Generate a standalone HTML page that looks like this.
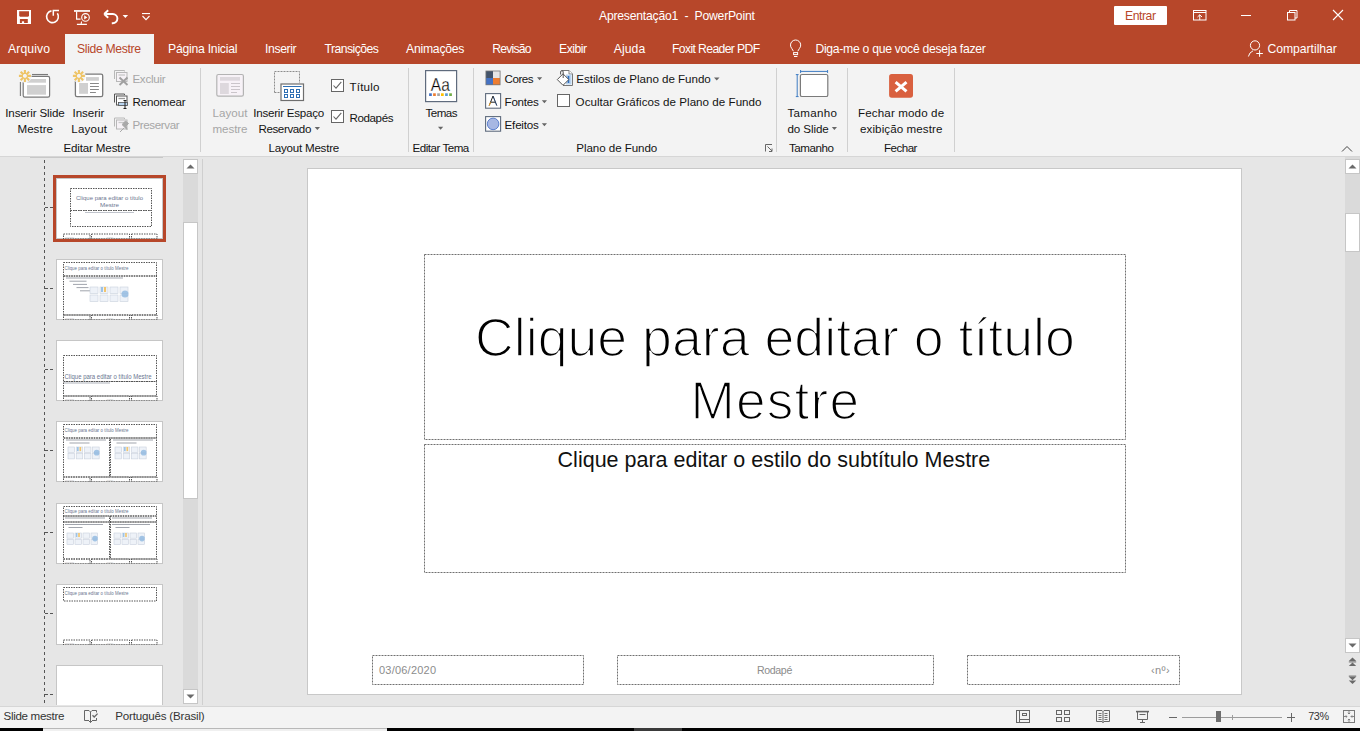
<!DOCTYPE html>
<html><head><meta charset="utf-8"><style>
html,body{margin:0;padding:0;}
body{width:1360px;height:731px;overflow:hidden;position:relative;background:#e6e6e6;font-family:'Liberation Sans', sans-serif;}
svg{overflow:visible}
</style></head><body>
<div style="position:absolute;left:0px;top:0px;width:1360px;height:64px;background:#b7472a;"></div>
<div style="position:absolute;left:65px;top:34px;width:89px;height:30px;background:#f3f3f3;"></div>
<div style="position:absolute;left:0px;top:64px;width:1360px;height:92px;background:#f3f3f3;"></div>
<div style="position:absolute;left:0px;top:156px;width:1360px;height:1px;background:#d6d6d6;"></div>
<div style="position:absolute;left:0px;top:706px;width:1360px;height:22px;background:#f3f3f3;border-top:1px solid #d6d6d6;box-sizing:border-box"></div>
<div style="position:absolute;left:0px;top:728px;width:1360px;height:3px;background:#000;"></div>
<div style="position:absolute;left:43px;top:728px;width:344px;height:3px;background:#f0f0f0;border-top:1px solid #b8b8b8;box-sizing:border-box"></div>
<div style="position:absolute;left:634px;top:728px;width:48px;height:3px;background:#3a3a3a;"></div>
<div style="position:absolute;left:1114px;top:6px;width:53px;height:19px;background:#fff;border-radius:1px"></div>
<div style="position:absolute;left:200px;top:68px;width:1px;height:84px;background:#d0d0d0;"></div>
<div style="position:absolute;left:408px;top:68px;width:1px;height:84px;background:#d0d0d0;"></div>
<div style="position:absolute;left:473px;top:68px;width:1px;height:84px;background:#d0d0d0;"></div>
<div style="position:absolute;left:776px;top:68px;width:1px;height:84px;background:#d0d0d0;"></div>
<div style="position:absolute;left:847px;top:68px;width:1px;height:84px;background:#d0d0d0;"></div>
<div style="position:absolute;left:954px;top:68px;width:1px;height:84px;background:#d0d0d0;"></div>
<div style="position:absolute;left:202px;top:159px;width:1px;height:546px;background:#cfcfcf;"></div>
<div style="position:absolute;left:183px;top:159px;width:15px;height:545px;background:#dadada;"></div>
<div style="position:absolute;left:183px;top:159px;width:15px;height:15px;background:#fff;border:1px solid #c6c6c6;box-sizing:border-box"></div>
<div style="position:absolute;left:183px;top:222px;width:15px;height:277px;background:#fff;border:1px solid #c6c6c6;box-sizing:border-box"></div>
<div style="position:absolute;left:183px;top:689px;width:15px;height:15px;background:#fff;border:1px solid #c6c6c6;box-sizing:border-box"></div>
<div style="position:absolute;left:1345px;top:157px;width:15px;height:549px;background:#dadada;"></div>
<div style="position:absolute;left:1345px;top:159px;width:15px;height:15px;background:#fff;border:1px solid #c6c6c6;box-sizing:border-box"></div>
<div style="position:absolute;left:1345px;top:213px;width:15px;height:39px;background:#fff;border:1px solid #c6c6c6;box-sizing:border-box"></div>
<div style="position:absolute;left:1345px;top:638px;width:15px;height:15px;background:#fff;border:1px solid #c6c6c6;box-sizing:border-box"></div>
<div style="position:absolute;left:1345px;top:653px;width:15px;height:53px;background:#e6e6e6;"></div>
<div style="position:absolute;left:307px;top:168px;width:935px;height:527px;background:#fff;border:1px solid #c8c8c8;box-sizing:border-box"></div>
<svg style="position:absolute;left:424px;top:254px;" width="702" height="186" viewBox="0 0 702 186"><rect x="0.5" y="0.5" width="701" height="185" fill="none" stroke="#707070" stroke-width="1" stroke-dasharray="2 1"/></svg>
<svg style="position:absolute;left:424px;top:444px;" width="702" height="129" viewBox="0 0 702 129"><rect x="0.5" y="0.5" width="701" height="128" fill="none" stroke="#707070" stroke-width="1" stroke-dasharray="2 1"/></svg>
<svg style="position:absolute;left:372px;top:655px;" width="212" height="30" viewBox="0 0 212 30"><rect x="0.5" y="0.5" width="211" height="29" fill="none" stroke="#707070" stroke-width="1" stroke-dasharray="2 1"/></svg>
<svg style="position:absolute;left:617px;top:655px;" width="317" height="30" viewBox="0 0 317 30"><rect x="0.5" y="0.5" width="316" height="29" fill="none" stroke="#707070" stroke-width="1" stroke-dasharray="2 1"/></svg>
<svg style="position:absolute;left:967px;top:655px;" width="213" height="30" viewBox="0 0 213 30"><rect x="0.5" y="0.5" width="212" height="29" fill="none" stroke="#707070" stroke-width="1" stroke-dasharray="2 1"/></svg>
<svg style="position:absolute;left:17px;top:10px;" width="14" height="14" viewBox="0 0 14 14"><rect x="0" y="0" width="14" height="14" fill="#fff"/><path d="M2.2 1.3 H12 V5.8 L11.2 6.8 H3 L2.2 5.8Z" fill="#b7472a"/><rect x="2.9" y="9" width="7.9" height="4" fill="#b7472a"/><rect x="4.9" y="11.3" width="2.2" height="1.7" fill="#fff"/></svg>
<svg style="position:absolute;left:44px;top:8px;" width="18" height="18" viewBox="0 0 18 18"><path d="M7.48 2.89 A5.9 5.9 0 1 0 13.33 5.32" fill="none" stroke="#fff" stroke-width="1.6"/><path d="M8.6 2.4 H15 M9.3 1.8 V7.8" stroke="#fff" stroke-width="1.5" fill="none"/></svg>
<svg style="position:absolute;left:73px;top:9px;" width="18" height="17" viewBox="0 0 18 17"><rect x="1" y="1.1" width="16" height="1.7" fill="#fff"/><path d="M3.6 2.5 V10.2 H7.5" fill="none" stroke="#fff" stroke-width="1.2"/><circle cx="12.5" cy="8.4" r="3.8" fill="none" stroke="#fff" stroke-width="1.1"/><path d="M11.2 6.3 L14.3 8.4 L11.2 10.5Z" fill="#fff"/><path d="M3.9 15.4 H13.9 M8.6 12.5 L8 15.4" stroke="#fff" stroke-width="1.1" fill="none"/></svg>
<svg style="position:absolute;left:102px;top:8px;" width="22" height="18" viewBox="0 0 22 18"><path d="M3.5 6 H10.8 A4.6 4.6 0 0 1 10.8 15.2 H9.8" fill="none" stroke="#fff" stroke-width="1.9"/><path d="M2.2 6 L6.2 2.2 M2.2 6 L6.2 9.8" stroke="#fff" stroke-width="1.9" fill="none"/></svg>
<svg style="position:absolute;left:122px;top:14px;" width="7" height="5" viewBox="0 0 7 5"><path d="M0.6 0.9 H6.1 L3.35 4Z" fill="#fff"/></svg>
<svg style="position:absolute;left:141px;top:12px;" width="10" height="9" viewBox="0 0 10 9"><rect x="1" y="1" width="8" height="1.1" fill="#fff"/><path d="M1.5 4 L5 7.6 L8.5 4" fill="none" stroke="#fff" stroke-width="1.1"/></svg>
<svg style="position:absolute;left:1192px;top:9px;" width="16" height="13" viewBox="0 0 16 13"><rect x="1.5" y="1.5" width="12.5" height="9.5" fill="none" stroke="#fff" stroke-width="1"/><path d="M1.5 3.5 H14" stroke="#fff" stroke-width="1"/><path d="M7.75 11 V5.8 M5.5 8 L7.75 5.8 L10 8" fill="none" stroke="#fff" stroke-width="1"/></svg>
<div style="position:absolute;left:1241px;top:15px;width:10px;height:1px;background:#fff;"></div>
<svg style="position:absolute;left:1285px;top:8px;" width="14" height="14" viewBox="0 0 14 14"><rect x="2.5" y="4.5" width="7.5" height="7.5" fill="none" stroke="#fff" stroke-width="1"/><path d="M4.5 4.5 V2.5 H12 V10 H10" fill="none" stroke="#fff" stroke-width="1"/></svg>
<svg style="position:absolute;left:1332px;top:9px;" width="12" height="12" viewBox="0 0 12 12"><path d="M1 1 L11 11 M11 1 L1 11" stroke="#fff" stroke-width="1.1"/></svg>
<svg style="position:absolute;left:788px;top:38px;" width="16" height="20" viewBox="0 0 16 20"><path d="M5.4 13.2 L3.8 10.5 A5.1 5.1 0 1 1 11.4 10.5 L9.8 13.2" fill="none" stroke="#fff" stroke-width="1"/><rect x="5.6" y="14.6" width="4" height="2" fill="none" stroke="#fff" stroke-width="1"/><path d="M6 18.5 H9.4" stroke="#fff" stroke-width="1"/></svg>
<svg style="position:absolute;left:1246px;top:38px;" width="18" height="20" viewBox="0 0 18 20"><circle cx="9" cy="7.4" r="4.6" fill="none" stroke="#fff" stroke-width="1"/><path d="M2.4 18.5 A8 8 0 0 1 7 12.8" fill="none" stroke="#fff" stroke-width="1"/><path d="M10.3 15.5 H16.9 M13.6 12.2 V18.8" stroke="#fff" stroke-width="1"/></svg>
<svg style="position:absolute;left:0px;top:0px;" width="60" height="100" viewBox="0 0 60 100"><path d="M32 74.5 H48" stroke="#7a7a7a" stroke-width="1.1"/><path d="M20.4 82 V96" stroke="#7a7a7a" stroke-width="1.1"/><rect x="23.2" y="76.4" width="26.4" height="20.8" rx="1.6" fill="#fff" stroke="#7a7a7a" stroke-width="1.2"/><rect x="27" y="79" width="19" height="3.7" fill="#d0d0d0"/><rect x="27" y="85.1" width="19" height="9.6" fill="#d0d0d0"/><circle cx="24.9" cy="75.9" r="6.8" fill="#f3f3f3"/><path d="M26.80 75.90 L30.90 75.90 M26.24 77.24 L29.14 80.14 M24.90 77.80 L24.90 81.90 M23.56 77.24 L20.66 80.14 M23.00 75.90 L18.90 75.90 M23.56 74.56 L20.66 71.66 M24.90 74.00 L24.90 69.90 M26.24 74.56 L29.14 71.66 " stroke="#eec466" stroke-width="2.1"/></svg>
<svg style="position:absolute;left:0px;top:0px;" width="110" height="100" viewBox="0 0 110 100"><rect x="75.4" y="74.2" width="27.3" height="22.5" rx="1.6" fill="#fff" stroke="#7a7a7a" stroke-width="1.3"/><rect x="86" y="77.1" width="12.9" height="3.7" fill="#d0d0d0"/><rect x="79.1" y="83" width="8.9" height="10.8" fill="#d0d0d0"/><path d="M90 83.5 H98.9 M90 86.5 H98.9 M90 89.5 H98.9 M90 92.5 H95.9" stroke="#7a7a7a" stroke-width="0.9"/><circle cx="78.9" cy="75.9" r="6.8" fill="#f3f3f3"/><path d="M80.80 75.90 L84.90 75.90 M80.24 77.24 L83.14 80.14 M78.90 77.80 L78.90 81.90 M77.56 77.24 L74.66 80.14 M77.00 75.90 L72.90 75.90 M77.56 74.56 L74.66 71.66 M78.90 74.00 L78.90 69.90 M80.24 74.56 L83.14 71.66 " stroke="#eec466" stroke-width="2.1"/></svg>
<svg style="position:absolute;left:0px;top:0px;" width="140" height="140" viewBox="0 0 140 140"><path d="M114.5 79 V70.5 H124.5 V71.5" fill="none" stroke="#b8b8b8" stroke-width="1"/><rect x="116.5" y="72.5" width="10.5" height="9" fill="#f6f2f6" stroke="#b8b8b8" stroke-width="1"/><path d="M118.5 75 H125" stroke="#c8c8c8" stroke-width="1.3"/><path d="M119.5 77.5 L127.5 85 M127.5 77.5 L119.5 85" stroke="#a0a0a0" stroke-width="1.9"/><path d="M114.5 102.5 V94.0 H124.5 V95.0" fill="none" stroke="#555" stroke-width="1"/><rect x="116.5" y="96.0" width="10.5" height="9" fill="#fff" stroke="#555" stroke-width="1"/><path d="M118.5 98.5 H125" stroke="#999" stroke-width="1.3"/><rect x="118.5" y="102.5" width="9" height="3" fill="#b8d4f0" stroke="#555" stroke-width="0.8"/><path d="M123.5 100.5 H126.5 M125 100.5 V108.5 M123.5 108.5 H126.5" stroke="#222" stroke-width="1"/><path d="M114.5 126.5 V118.0 H124.5 V119.0" fill="none" stroke="#b8b8b8" stroke-width="1"/><rect x="116.5" y="120.0" width="10.5" height="9" fill="#f6f2f6" stroke="#b8b8b8" stroke-width="1"/><path d="M118.5 122.5 H125" stroke="#c8c8c8" stroke-width="1.3"/><path d="M120 132 L124 128 M122.5 125 L127 129.5 L126 126 L128.5 123.5 L125.5 121 L123 123.5 Z" fill="#a9a9a9" stroke="#a9a9a9" stroke-width="1"/></svg>
<svg style="position:absolute;left:0px;top:0px;" width="250" height="100" viewBox="0 0 250 100"><rect x="216.8" y="74.5" width="26.6" height="21.6" rx="1.6" fill="#f7f2f7" stroke="#b3b3b3" stroke-width="1.2"/><rect x="220" y="77" width="20" height="3.7" fill="#ddd8dd"/><rect x="220" y="83" width="8.8" height="11" fill="#ddd8dd"/><path d="M231 83.5 H240 M231 86.5 H240 M231 89.5 H240 M231 92.5 H237" stroke="#c4c0c4" stroke-width="0.9"/></svg>
<svg style="position:absolute;left:0px;top:0px;" width="310" height="105" viewBox="0 0 310 105"><path d="M274.5 92.5 V71.5 H299.5 V83" fill="none" stroke="#8c8c8c" stroke-width="1" stroke-dasharray="2 1"/><path d="M274.5 92.5 H280" stroke="#8c8c8c" stroke-width="1" stroke-dasharray="2 1"/><rect x="281" y="84" width="22.5" height="16.5" fill="#fff" stroke="#6e6e6e" stroke-width="1.2"/><path d="M283 86.5 H301.5" stroke="#2e6fb4" stroke-width="1"/><rect x="284.5" y="89.5" width="3" height="3" fill="#fff" stroke="#2e6fb4" stroke-width="1"/><rect x="284.5" y="94.5" width="3" height="3" fill="#fff" stroke="#2e6fb4" stroke-width="1"/><rect x="290.5" y="89.5" width="3" height="3" fill="#fff" stroke="#2e6fb4" stroke-width="1"/><rect x="290.5" y="94.5" width="3" height="3" fill="#fff" stroke="#2e6fb4" stroke-width="1"/><rect x="296.5" y="89.5" width="3" height="3" fill="#fff" stroke="#2e6fb4" stroke-width="1"/><rect x="296.5" y="94.5" width="3" height="3" fill="#fff" stroke="#2e6fb4" stroke-width="1"/><path d="M314.7 127 H320 L317.35 130Z" fill="#666"/></svg>
<svg style="position:absolute;left:0px;top:0px;" width="600" height="130" viewBox="0 0 600 130"><rect x="331.5" y="79.5" width="12" height="12" fill="#fff" stroke="#666" stroke-width="1"/><path d="M333.5 85.5 L336 88.2 L341.3 81.8" fill="none" stroke="#666" stroke-width="1.1"/><rect x="331.5" y="110.5" width="12" height="12" fill="#fff" stroke="#666" stroke-width="1"/><path d="M333.5 116.5 L336 119.2 L341.3 112.8" fill="none" stroke="#666" stroke-width="1.1"/><rect x="557.5" y="94.5" width="12" height="12" fill="#fff" stroke="#666" stroke-width="1"/></svg>
<svg style="position:absolute;left:0px;top:0px;" width="460" height="135" viewBox="0 0 460 135"><rect x="425.6" y="70.6" width="31" height="31" fill="#fff" stroke="#5f6b7d" stroke-width="1.2"/><text x="430.8" y="90.8" font-family="Liberation Sans" font-size="17.5" fill="#000" stroke="#fff" stroke-width="0.3" textLength="19" lengthAdjust="spacingAndGlyphs">Aa</text><rect x="429.1" y="93.3" width="2.7" height="2.7" fill="#4472c4"/><rect x="433.1" y="93.3" width="2.7" height="2.7" fill="#ed7d31"/><rect x="437.2" y="93.3" width="2.7" height="2.7" fill="#a5a5a5"/><rect x="441" y="93.3" width="2.7" height="2.7" fill="#ffc000"/><rect x="445.1" y="93.3" width="2.7" height="2.7" fill="#5b9bd5"/><rect x="449.2" y="93.3" width="2.7" height="2.7" fill="#70ad47"/><path d="M438 126.8 H443.2 L440.6 129.8Z" fill="#666"/></svg>
<svg style="position:absolute;left:0px;top:0px;" width="550" height="135" viewBox="0 0 550 135"><rect x="485.5" y="70.6" width="15" height="14.6" fill="#777"/><rect x="486.3" y="71.4" width="6.7" height="6.6" fill="#44546a"/><rect x="493" y="71.4" width="6.7" height="6.6" fill="#e7e6e6"/><rect x="486.3" y="78" width="6.7" height="6.4" fill="#4472c4"/><rect x="493" y="78" width="6.7" height="6.4" fill="#ed7d31"/><rect x="485.6" y="93.6" width="15" height="14.6" fill="#fff" stroke="#5f6b7d" stroke-width="1.1"/><path d="M489.2 105.6 L493 96 L496.8 105.6 M490.6 102.2 H495.4" fill="none" stroke="#222" stroke-width="1"/><path d="M489.2 105.6 L490.5 102.3" stroke="#f0a020" stroke-width="1"/><path d="M493.3 96.5 L496.8 105.6" stroke="#2060c0" stroke-width="0.6" opacity="0.7"/><rect x="485.6" y="116.6" width="15" height="14.6" fill="#fff" stroke="#5f6b7d" stroke-width="1.1"/><circle cx="493.1" cy="123.9" r="5.8" fill="#a7b7e3" stroke="#4f75c8" stroke-width="0.9"/><path d="M537 77.3 H542.2 L539.6 80.3Z M541.8 100.3 H547 L544.4 103.3Z M541.8 123.3 H547 L544.4 126.3Z" fill="#666"/></svg>
<svg style="position:absolute;left:0px;top:0px;" width="725" height="90" viewBox="0 0 725 90"><path d="M561.5 70.5 H569 L572.5 74 V85.5 H563" fill="#fff" stroke="#777" stroke-width="1"/><path d="M569 70.5 V74 H572.5" fill="#fff" stroke="#777" stroke-width="0.9"/><rect x="566" y="74.5" width="5.5" height="10" fill="#b9d3ee"/><path d="M568.5 76 V83" stroke="#2f6fbf" stroke-width="1.6"/><path d="M557.3 79.6 L563 73.8 L568.8 79.6 L563 85.3Z" fill="#fff" stroke="#555" stroke-width="1"/><path d="M560.6 74.5 V72 A1.3 1.3 0 0 1 563.2 72 V78" fill="none" stroke="#555" stroke-width="1"/><path d="M714 77.5 H719.5 L716.75 80.5Z" fill="#666"/></svg>
<svg style="position:absolute;left:0px;top:0px;" width="840" height="135" viewBox="0 0 840 135"><rect x="800.4" y="74.5" width="27.4" height="22" rx="1.6" fill="#fff" stroke="#7a7a7a" stroke-width="1.2"/><path d="M800.6 71.4 H827.6 M800.6 70 V73 M827.6 70 V73 M797.2 74.6 V96.6 M795.8 74.6 H798.6 M795.8 96.6 H798.6" stroke="#3e7cc3" stroke-width="1"/><path d="M831.8 127 H837 L834.4 130Z" fill="#666"/></svg>
<svg style="position:absolute;left:0px;top:0px;" width="920" height="100" viewBox="0 0 920 100"><rect x="889.1" y="74.1" width="23.9" height="23.6" rx="2.6" fill="#d9603f"/><path d="M895.6 82.2 L906.5 91.4 M906.5 82.2 L895.6 91.4" stroke="#fff" stroke-width="3"/></svg>
<svg style="position:absolute;left:0px;top:0px;" width="780" height="155" viewBox="0 0 780 155"><path d="M765.5 144.5 H772 M765.5 144.5 V151.5 M767.5 146.5 L772 151 M772 148.5 V151.5 H769" fill="none" stroke="#666" stroke-width="1"/></svg>
<svg style="position:absolute;left:1340px;top:144px;" width="14" height="10" viewBox="0 0 14 10"><path d="M2 7.5 L7 2.5 L12 7.5" fill="none" stroke="#444" stroke-width="1"/></svg>
<div style="position:absolute;left:30px;top:157px;width:133px;height:1px;background:#c8c8c8;"></div>
<svg style="position:absolute;left:0px;top:160px;" width="60" height="545" viewBox="0 0 60 545"><path d="M44.5 0 V545" stroke="#555" stroke-width="1" stroke-dasharray="3 3"/></svg>
<svg style="position:absolute;left:0px;top:0px;" width="60" height="720" viewBox="0 0 60 720"><path d="M45 207.5 H53" stroke="#555" stroke-width="1" stroke-dasharray="3 2"/></svg>
<svg style="position:absolute;left:0px;top:0px;" width="60" height="720" viewBox="0 0 60 720"><path d="M45 288.5 H53" stroke="#555" stroke-width="1" stroke-dasharray="3 2"/></svg>
<svg style="position:absolute;left:0px;top:0px;" width="60" height="720" viewBox="0 0 60 720"><path d="M45 369.5 H53" stroke="#555" stroke-width="1" stroke-dasharray="3 2"/></svg>
<svg style="position:absolute;left:0px;top:0px;" width="60" height="720" viewBox="0 0 60 720"><path d="M45 450.5 H53" stroke="#555" stroke-width="1" stroke-dasharray="3 2"/></svg>
<svg style="position:absolute;left:0px;top:0px;" width="60" height="720" viewBox="0 0 60 720"><path d="M45 532.5 H53" stroke="#555" stroke-width="1" stroke-dasharray="3 2"/></svg>
<svg style="position:absolute;left:0px;top:0px;" width="60" height="720" viewBox="0 0 60 720"><path d="M45 613.5 H53" stroke="#555" stroke-width="1" stroke-dasharray="3 2"/></svg>
<svg style="position:absolute;left:0px;top:0px;" width="60" height="720" viewBox="0 0 60 720"><path d="M45 694.5 H53" stroke="#555" stroke-width="1" stroke-dasharray="3 2"/></svg>
<svg style="position:absolute;left:183px;top:159px;" width="15" height="15" viewBox="0 0 15 15"><path d="M3.5 9.5 H11.5 L7.5 5.5Z" fill="#6a6a6a"/></svg>
<svg style="position:absolute;left:183px;top:689px;" width="15" height="15" viewBox="0 0 15 15"><path d="M3.5 5.5 H11.5 L7.5 9.5Z" fill="#6a6a6a"/></svg>
<svg style="position:absolute;left:1345px;top:159px;" width="15" height="15" viewBox="0 0 15 15"><path d="M3.5 9.5 H11.5 L7.5 5.5Z" fill="#6a6a6a"/></svg>
<svg style="position:absolute;left:1345px;top:638px;" width="15" height="15" viewBox="0 0 15 15"><path d="M3.5 5.5 H11.5 L7.5 9.5Z" fill="#6a6a6a"/></svg>
<svg style="position:absolute;left:1345px;top:655px;" width="15" height="32" viewBox="0 0 15 32"><path d="M3.8 6 L7.5 2.5 L11.2 6Z M3.8 11 L7.5 7.5 L11.2 11Z" fill="#6a6a6a"/><rect x="3.8" y="6.4" width="7.4" height="1" fill="#6a6a6a"/><path d="M3.8 21.8 L11.2 21.8 L7.5 25.3Z M3.8 25.5 L11.2 25.5 L7.5 29Z" fill="#6a6a6a"/><rect x="3.8" y="20.6" width="7.4" height="1" fill="#6a6a6a"/></svg>
<svg style="position:absolute;left:78px;top:706px;" width="22" height="20" viewBox="0 0 22 20"><path d="M11 4.5 H6.5 V14.5 H11 M11 4.5 L12.5 6 L14 4.5 M12.5 6 V16.5 M11 15 L12.5 16.5 L14 15 M14 4.5 H18.5 V6.5 M18.5 12 V14.5 H14" fill="none" stroke="#666" stroke-width="1"/><path d="M14.5 9.3 L16.2 11 L19.6 7.6" fill="none" stroke="#666" stroke-width="1.3"/></svg>
<svg style="position:absolute;left:1014px;top:708px;" width="18" height="18" viewBox="0 0 18 18"><rect x="2.5" y="2.5" width="13" height="12" fill="none" stroke="#666"/><path d="M5.5 2.5 V14.5 M5.5 11.5 H15.5" stroke="#666"/><rect x="8.5" y="5.5" width="4" height="2" fill="none" stroke="#666"/></svg>
<svg style="position:absolute;left:1054px;top:708px;" width="18" height="18" viewBox="0 0 18 18"><rect x="2.5" y="2.5" width="5" height="4" fill="none" stroke="#666"/><rect x="10.5" y="2.5" width="5" height="4" fill="none" stroke="#666"/><rect x="2.5" y="9.5" width="5" height="4" fill="none" stroke="#666"/><rect x="10.5" y="9.5" width="5" height="4" fill="none" stroke="#666"/></svg>
<svg style="position:absolute;left:1094px;top:708px;" width="18" height="18" viewBox="0 0 18 18"><path d="M2.5 2.5 H8 L9 3.5 L10 2.5 H15.5 V13.5 H10 L9 14.5 L8 13.5 H2.5Z M9 3.5 V15" fill="none" stroke="#666"/><path d="M4.5 5.5 H7.5 M4.5 7.5 H7.5 M4.5 9.5 H7.5 M4.5 11.5 H7.5 M10.5 5.5 H13.5 M10.5 7.5 H13.5 M10.5 9.5 H13.5 M10.5 11.5 H13.5" stroke="#666" stroke-width="0.9"/></svg>
<svg style="position:absolute;left:1134px;top:708px;" width="18" height="18" viewBox="0 0 18 18"><path d="M2 3.6 H15" stroke="#666" stroke-width="1.6"/><path d="M3.5 4 V11.5 H13.5 V4 M5.5 6.5 H11.5 M8.5 11.5 V14.5 M6 14.5 H11" fill="none" stroke="#666"/></svg>
<div style="position:absolute;left:1169px;top:717px;width:8px;height:1px;background:#666;"></div>
<div style="position:absolute;left:1182px;top:717px;width:100px;height:1px;background:#9c9c9c;"></div>
<div style="position:absolute;left:1232px;top:715px;width:1px;height:5px;background:#9c9c9c;"></div>
<div style="position:absolute;left:1216px;top:711px;width:5px;height:11px;background:#6e6e6e;"></div>
<div style="position:absolute;left:1287px;top:717px;width:8px;height:1px;background:#666;"></div>
<div style="position:absolute;left:1290.5px;top:713px;width:1px;height:9px;background:#666;"></div>
<svg style="position:absolute;left:1341px;top:708px;" width="16" height="16" viewBox="0 0 16 16"><rect x="2.5" y="2.5" width="11" height="12" fill="none" stroke="#7a7a7a"/><path d="M8 3 V6 M6.8 4.8 L8 6 L9.2 4.8 M8 14 V11 M6.8 12.2 L8 11 L9.2 12.2 M3 8.5 H6 M4.8 7.3 L6 8.5 L4.8 9.7 M13 8.5 H10 M11.2 7.3 L10 8.5 L11.2 9.7" fill="none" stroke="#7a7a7a" stroke-width="0.9"/></svg>
<div style="position:absolute;left:53px;top:175px;width:113px;height:67px;background:#b7472a;"></div>
<div style="position:absolute;left:56px;top:178px;width:107px;height:61px;overflow:hidden"><svg width="107" height="61" viewBox="0 0 107 61" style="position:absolute;left:0;top:0"><rect x="0.5" y="0.5" width="106" height="60" fill="#fff" stroke="#c6c6c6" stroke-width="1"/><rect x="14.5" y="10.5" width="81" height="22" fill="none" stroke="#555" stroke-width="1" stroke-dasharray="1.5 1" /><rect x="14.5" y="32.5" width="81" height="16" fill="none" stroke="#555" stroke-width="1" stroke-dasharray="1.5 1" /><text x="53.5" y="21.8" font-family="Liberation Sans" font-size="5.6" fill="#6b7690" text-anchor="middle" textLength="67" lengthAdjust="spacingAndGlyphs">Clique para editar o título</text><text x="53.5" y="29.4" font-family="Liberation Sans" font-size="5.6" fill="#6b7690" text-anchor="middle" textLength="19" lengthAdjust="spacingAndGlyphs">Mestre</text><rect x="29" y="34" width="49" height="1" fill="#c0c4cc"/><rect x="7.5" y="56.0" width="26.5" height="5.0" fill="none" stroke="#555" stroke-width="1" stroke-dasharray="1.5 1" /><rect x="35.5" y="56.0" width="38" height="5.0" fill="none" stroke="#555" stroke-width="1" stroke-dasharray="1.5 1" /><rect x="75.5" y="56.0" width="25.5" height="5.0" fill="none" stroke="#555" stroke-width="1" stroke-dasharray="1.5 1" /><text x="9" y="59.8" font-family="Liberation Sans" font-size="1.8" fill="#bbb" text-anchor="start">03/06/2020</text><text x="54" y="59.8" font-family="Liberation Sans" font-size="1.8" fill="#bbb" text-anchor="middle">Rodapé</text></svg></div>
<div style="position:absolute;left:56px;top:259px;width:107px;height:61px;overflow:hidden"><svg width="107" height="61" viewBox="0 0 107 61" style="position:absolute;left:0;top:0"><rect x="0.5" y="0.5" width="106" height="60" fill="#fff" stroke="#c6c6c6" stroke-width="1"/><rect x="7.5" y="3.5" width="93" height="13.5" fill="none" stroke="#555" stroke-width="1" stroke-dasharray="1.5 1" /><rect x="7.5" y="17.0" width="93" height="39.0" fill="none" stroke="#555" stroke-width="1" stroke-dasharray="1.5 1" /><text x="8.5" y="11" font-family="Liberation Sans" font-size="5.2" fill="#6b7690" text-anchor="start" textLength="64" lengthAdjust="spacingAndGlyphs">Clique para editar o título Mestre</text><rect x="10.0" y="18.5" width="57" height="1" fill="#8a8f99" opacity="0.8"/><rect x="13.5" y="21.7" width="17" height="1" fill="#8a8f99" opacity="0.8"/><rect x="17.0" y="24.9" width="14" height="1" fill="#8a8f99" opacity="0.8"/><rect x="20.5" y="28.1" width="12" height="1" fill="#8a8f99" opacity="0.8"/><rect x="24.0" y="31.3" width="11" height="1" fill="#8a8f99" opacity="0.8"/><rect x="34.0" y="28.0" width="8.0" height="6.5" fill="#eef2f8" stroke="#c8d0dc" stroke-width="0.6"/><rect x="34.0" y="36.0" width="8.0" height="6.5" fill="#eef2f8" stroke="#c8d0dc" stroke-width="0.6"/><rect x="44.0" y="28.0" width="8.0" height="6.5" fill="#eef2f8" stroke="#c8d0dc" stroke-width="0.6"/><rect x="44.0" y="36.0" width="8.0" height="6.5" fill="#eef2f8" stroke="#c8d0dc" stroke-width="0.6"/><rect x="54.0" y="28.0" width="8.0" height="6.5" fill="#eef2f8" stroke="#c8d0dc" stroke-width="0.6"/><rect x="54.0" y="36.0" width="8.0" height="6.5" fill="#eef2f8" stroke="#c8d0dc" stroke-width="0.6"/><rect x="64.0" y="28.0" width="8.0" height="6.5" fill="#eef2f8" stroke="#c8d0dc" stroke-width="0.6"/><rect x="64.0" y="36.0" width="8.0" height="6.5" fill="#eef2f8" stroke="#c8d0dc" stroke-width="0.6"/><rect x="45.0" y="28" width="2.0" height="5.0" fill="#9cc3e6"/><rect x="48.0" y="28" width="2.0" height="5.0" fill="#f2c46b"/><circle cx="69.0" cy="35.0" r="3.5" fill="#8fb8e0" opacity="0.8"/><rect x="7.5" y="56.0" width="26.5" height="5.0" fill="none" stroke="#555" stroke-width="1" stroke-dasharray="1.5 1" /><rect x="35.5" y="56.0" width="38" height="5.0" fill="none" stroke="#555" stroke-width="1" stroke-dasharray="1.5 1" /><rect x="75.5" y="56.0" width="25.5" height="5.0" fill="none" stroke="#555" stroke-width="1" stroke-dasharray="1.5 1" /><text x="9" y="59.8" font-family="Liberation Sans" font-size="1.8" fill="#bbb" text-anchor="start">03/06/2020</text><text x="54" y="59.8" font-family="Liberation Sans" font-size="1.8" fill="#bbb" text-anchor="middle">Rodapé</text></svg></div>
<div style="position:absolute;left:56px;top:340px;width:107px;height:61px;overflow:hidden"><svg width="107" height="61" viewBox="0 0 107 61" style="position:absolute;left:0;top:0"><rect x="0.5" y="0.5" width="106" height="60" fill="#fff" stroke="#c6c6c6" stroke-width="1"/><rect x="7.5" y="15.5" width="93" height="26" fill="none" stroke="#555" stroke-width="1" stroke-dasharray="1.5 1" /><rect x="7.5" y="41.5" width="93" height="14.5" fill="none" stroke="#555" stroke-width="1" stroke-dasharray="1.5 1" /><text x="8.5" y="38.6" font-family="Liberation Sans" font-size="6.3" fill="#6b7690" text-anchor="start" textLength="87" lengthAdjust="spacingAndGlyphs">Clique para editar o título Mestre</text><rect x="8" y="42.5" width="46" height="1" fill="#b0b4bc"/><rect x="7.5" y="56.0" width="26.5" height="5.0" fill="none" stroke="#555" stroke-width="1" stroke-dasharray="1.5 1" /><rect x="35.5" y="56.0" width="38" height="5.0" fill="none" stroke="#555" stroke-width="1" stroke-dasharray="1.5 1" /><rect x="75.5" y="56.0" width="25.5" height="5.0" fill="none" stroke="#555" stroke-width="1" stroke-dasharray="1.5 1" /><text x="9" y="59.8" font-family="Liberation Sans" font-size="1.8" fill="#bbb" text-anchor="start">03/06/2020</text><text x="54" y="59.8" font-family="Liberation Sans" font-size="1.8" fill="#bbb" text-anchor="middle">Rodapé</text></svg></div>
<div style="position:absolute;left:56px;top:421px;width:107px;height:61px;overflow:hidden"><svg width="107" height="61" viewBox="0 0 107 61" style="position:absolute;left:0;top:0"><rect x="0.5" y="0.5" width="106" height="60" fill="#fff" stroke="#c6c6c6" stroke-width="1"/><rect x="7.5" y="3.5" width="93" height="13.5" fill="none" stroke="#555" stroke-width="1" stroke-dasharray="1.5 1" /><rect x="7.5" y="17.0" width="46" height="39.0" fill="none" stroke="#555" stroke-width="1" stroke-dasharray="1.5 1" /><rect x="54.5" y="17.0" width="46" height="39.0" fill="none" stroke="#555" stroke-width="1" stroke-dasharray="1.5 1" /><text x="8.5" y="11" font-family="Liberation Sans" font-size="5.2" fill="#6b7690" text-anchor="start" textLength="64" lengthAdjust="spacingAndGlyphs">Clique para editar o título Mestre</text><rect x="10.0" y="18.5" width="40" height="1" fill="#8a8f99" opacity="0.8"/><rect x="13.5" y="21.5" width="20" height="1" fill="#8a8f99" opacity="0.8"/><rect x="12.0" y="26.0" width="6.56" height="5.33" fill="#eef2f8" stroke="#c8d0dc" stroke-width="0.6"/><rect x="12.0" y="32.56" width="6.56" height="5.33" fill="#eef2f8" stroke="#c8d0dc" stroke-width="0.6"/><rect x="20.2" y="26.0" width="6.56" height="5.33" fill="#eef2f8" stroke="#c8d0dc" stroke-width="0.6"/><rect x="20.2" y="32.56" width="6.56" height="5.33" fill="#eef2f8" stroke="#c8d0dc" stroke-width="0.6"/><rect x="28.4" y="26.0" width="6.56" height="5.33" fill="#eef2f8" stroke="#c8d0dc" stroke-width="0.6"/><rect x="28.4" y="32.56" width="6.56" height="5.33" fill="#eef2f8" stroke="#c8d0dc" stroke-width="0.6"/><rect x="36.599999999999994" y="26.0" width="6.56" height="5.33" fill="#eef2f8" stroke="#c8d0dc" stroke-width="0.6"/><rect x="36.599999999999994" y="32.56" width="6.56" height="5.33" fill="#eef2f8" stroke="#c8d0dc" stroke-width="0.6"/><rect x="21.02" y="26" width="1.64" height="4.1" fill="#9cc3e6"/><rect x="23.479999999999997" y="26" width="1.64" height="4.1" fill="#f2c46b"/><circle cx="40.7" cy="31.74" r="2.8699999999999997" fill="#8fb8e0" opacity="0.8"/><rect x="57.0" y="18.5" width="40" height="1" fill="#8a8f99" opacity="0.8"/><rect x="60.5" y="21.5" width="20" height="1" fill="#8a8f99" opacity="0.8"/><rect x="59.0" y="26.0" width="6.56" height="5.33" fill="#eef2f8" stroke="#c8d0dc" stroke-width="0.6"/><rect x="59.0" y="32.56" width="6.56" height="5.33" fill="#eef2f8" stroke="#c8d0dc" stroke-width="0.6"/><rect x="67.2" y="26.0" width="6.56" height="5.33" fill="#eef2f8" stroke="#c8d0dc" stroke-width="0.6"/><rect x="67.2" y="32.56" width="6.56" height="5.33" fill="#eef2f8" stroke="#c8d0dc" stroke-width="0.6"/><rect x="75.4" y="26.0" width="6.56" height="5.33" fill="#eef2f8" stroke="#c8d0dc" stroke-width="0.6"/><rect x="75.4" y="32.56" width="6.56" height="5.33" fill="#eef2f8" stroke="#c8d0dc" stroke-width="0.6"/><rect x="83.6" y="26.0" width="6.56" height="5.33" fill="#eef2f8" stroke="#c8d0dc" stroke-width="0.6"/><rect x="83.6" y="32.56" width="6.56" height="5.33" fill="#eef2f8" stroke="#c8d0dc" stroke-width="0.6"/><rect x="68.02" y="26" width="1.64" height="4.1" fill="#9cc3e6"/><rect x="70.48" y="26" width="1.64" height="4.1" fill="#f2c46b"/><circle cx="87.7" cy="31.74" r="2.8699999999999997" fill="#8fb8e0" opacity="0.8"/><rect x="7.5" y="56.0" width="26.5" height="5.0" fill="none" stroke="#555" stroke-width="1" stroke-dasharray="1.5 1" /><rect x="35.5" y="56.0" width="38" height="5.0" fill="none" stroke="#555" stroke-width="1" stroke-dasharray="1.5 1" /><rect x="75.5" y="56.0" width="25.5" height="5.0" fill="none" stroke="#555" stroke-width="1" stroke-dasharray="1.5 1" /><text x="9" y="59.8" font-family="Liberation Sans" font-size="1.8" fill="#bbb" text-anchor="start">03/06/2020</text><text x="54" y="59.8" font-family="Liberation Sans" font-size="1.8" fill="#bbb" text-anchor="middle">Rodapé</text></svg></div>
<div style="position:absolute;left:56px;top:503px;width:107px;height:61px;overflow:hidden"><svg width="107" height="61" viewBox="0 0 107 61" style="position:absolute;left:0;top:0"><rect x="0.5" y="0.5" width="106" height="60" fill="#fff" stroke="#c6c6c6" stroke-width="1"/><rect x="7.5" y="3.5" width="93" height="9.5" fill="none" stroke="#555" stroke-width="1" stroke-dasharray="1.5 1" /><rect x="7.5" y="13.0" width="46" height="6.0" fill="none" stroke="#555" stroke-width="1" stroke-dasharray="1.5 1" /><rect x="54.5" y="13.0" width="46" height="6.0" fill="none" stroke="#555" stroke-width="1" stroke-dasharray="1.5 1" /><rect x="7.5" y="19.0" width="46" height="37.0" fill="none" stroke="#555" stroke-width="1" stroke-dasharray="1.5 1" /><rect x="54.5" y="19.0" width="46" height="37.0" fill="none" stroke="#555" stroke-width="1" stroke-dasharray="1.5 1" /><text x="8.5" y="9.5" font-family="Liberation Sans" font-size="5.2" fill="#6b7690" text-anchor="start" textLength="64" lengthAdjust="spacingAndGlyphs">Clique para editar o título Mestre</text><rect x="9.0" y="14.5" width="40" height="1" fill="#8a8f99" opacity="0.8"/><rect x="56.0" y="14.5" width="40" height="1" fill="#8a8f99" opacity="0.8"/><rect x="9.0" y="21.0" width="38" height="1" fill="#8a8f99" opacity="0.8"/><rect x="12.5" y="24.0" width="14" height="1" fill="#8a8f99" opacity="0.8"/><rect x="11.0" y="30.0" width="6.4" height="5.2" fill="#eef2f8" stroke="#c8d0dc" stroke-width="0.6"/><rect x="11.0" y="36.4" width="6.4" height="5.2" fill="#eef2f8" stroke="#c8d0dc" stroke-width="0.6"/><rect x="19.0" y="30.0" width="6.4" height="5.2" fill="#eef2f8" stroke="#c8d0dc" stroke-width="0.6"/><rect x="19.0" y="36.4" width="6.4" height="5.2" fill="#eef2f8" stroke="#c8d0dc" stroke-width="0.6"/><rect x="27.0" y="30.0" width="6.4" height="5.2" fill="#eef2f8" stroke="#c8d0dc" stroke-width="0.6"/><rect x="27.0" y="36.4" width="6.4" height="5.2" fill="#eef2f8" stroke="#c8d0dc" stroke-width="0.6"/><rect x="35.0" y="30.0" width="6.4" height="5.2" fill="#eef2f8" stroke="#c8d0dc" stroke-width="0.6"/><rect x="35.0" y="36.4" width="6.4" height="5.2" fill="#eef2f8" stroke="#c8d0dc" stroke-width="0.6"/><rect x="19.8" y="30" width="1.6" height="4.0" fill="#9cc3e6"/><rect x="22.200000000000003" y="30" width="1.6" height="4.0" fill="#f2c46b"/><circle cx="39.0" cy="35.6" r="2.8000000000000003" fill="#8fb8e0" opacity="0.8"/><rect x="56.0" y="21.0" width="38" height="1" fill="#8a8f99" opacity="0.8"/><rect x="59.5" y="24.0" width="14" height="1" fill="#8a8f99" opacity="0.8"/><rect x="58.0" y="30.0" width="6.4" height="5.2" fill="#eef2f8" stroke="#c8d0dc" stroke-width="0.6"/><rect x="58.0" y="36.4" width="6.4" height="5.2" fill="#eef2f8" stroke="#c8d0dc" stroke-width="0.6"/><rect x="66.0" y="30.0" width="6.4" height="5.2" fill="#eef2f8" stroke="#c8d0dc" stroke-width="0.6"/><rect x="66.0" y="36.4" width="6.4" height="5.2" fill="#eef2f8" stroke="#c8d0dc" stroke-width="0.6"/><rect x="74.0" y="30.0" width="6.4" height="5.2" fill="#eef2f8" stroke="#c8d0dc" stroke-width="0.6"/><rect x="74.0" y="36.4" width="6.4" height="5.2" fill="#eef2f8" stroke="#c8d0dc" stroke-width="0.6"/><rect x="82.0" y="30.0" width="6.4" height="5.2" fill="#eef2f8" stroke="#c8d0dc" stroke-width="0.6"/><rect x="82.0" y="36.4" width="6.4" height="5.2" fill="#eef2f8" stroke="#c8d0dc" stroke-width="0.6"/><rect x="66.8" y="30" width="1.6" height="4.0" fill="#9cc3e6"/><rect x="69.2" y="30" width="1.6" height="4.0" fill="#f2c46b"/><circle cx="86.0" cy="35.6" r="2.8000000000000003" fill="#8fb8e0" opacity="0.8"/><rect x="7.5" y="56.0" width="26.5" height="5.0" fill="none" stroke="#555" stroke-width="1" stroke-dasharray="1.5 1" /><rect x="35.5" y="56.0" width="38" height="5.0" fill="none" stroke="#555" stroke-width="1" stroke-dasharray="1.5 1" /><rect x="75.5" y="56.0" width="25.5" height="5.0" fill="none" stroke="#555" stroke-width="1" stroke-dasharray="1.5 1" /><text x="9" y="59.8" font-family="Liberation Sans" font-size="1.8" fill="#bbb" text-anchor="start">03/06/2020</text><text x="54" y="59.8" font-family="Liberation Sans" font-size="1.8" fill="#bbb" text-anchor="middle">Rodapé</text></svg></div>
<div style="position:absolute;left:56px;top:584px;width:107px;height:61px;overflow:hidden"><svg width="107" height="61" viewBox="0 0 107 61" style="position:absolute;left:0;top:0"><rect x="0.5" y="0.5" width="106" height="60" fill="#fff" stroke="#c6c6c6" stroke-width="1"/><rect x="7.5" y="3.5" width="93" height="13.5" fill="none" stroke="#555" stroke-width="1" stroke-dasharray="1.5 1" /><text x="8.5" y="11" font-family="Liberation Sans" font-size="5.2" fill="#6b7690" text-anchor="start" textLength="64" lengthAdjust="spacingAndGlyphs">Clique para editar o título Mestre</text><rect x="7.5" y="56.0" width="26.5" height="5.0" fill="none" stroke="#555" stroke-width="1" stroke-dasharray="1.5 1" /><rect x="35.5" y="56.0" width="38" height="5.0" fill="none" stroke="#555" stroke-width="1" stroke-dasharray="1.5 1" /><rect x="75.5" y="56.0" width="25.5" height="5.0" fill="none" stroke="#555" stroke-width="1" stroke-dasharray="1.5 1" /><text x="9" y="59.8" font-family="Liberation Sans" font-size="1.8" fill="#bbb" text-anchor="start">03/06/2020</text><text x="54" y="59.8" font-family="Liberation Sans" font-size="1.8" fill="#bbb" text-anchor="middle">Rodapé</text></svg></div>
<div style="position:absolute;left:56px;top:665px;width:107px;height:40px;overflow:hidden"><svg width="107" height="61" viewBox="0 0 107 61" style="position:absolute;left:0;top:0"><rect x="0.5" y="0.5" width="106" height="60" fill="#fff" stroke="#c6c6c6" stroke-width="1"/></svg></div>
<span style="position:absolute;left:599.00px;top:10.00px;font-size:12.200px;line-height:1;color:#fff;white-space:pre;letter-spacing:-0.225px;">Apresentação1  -  PowerPoint</span>
<span style="position:absolute;left:1125.00px;top:10.00px;font-size:12.200px;line-height:1;color:#b7472a;white-space:pre;letter-spacing:-0.445px;">Entrar</span>
<span style="position:absolute;left:8.00px;top:43.00px;font-size:12.200px;line-height:1;color:#fff;white-space:pre;letter-spacing:0.106px;">Arquivo</span>
<span style="position:absolute;left:168.00px;top:43.00px;font-size:12.200px;line-height:1;color:#fff;white-space:pre;letter-spacing:-0.236px;">Página Inicial</span>
<span style="position:absolute;left:265.00px;top:43.00px;font-size:12.200px;line-height:1;color:#fff;white-space:pre;letter-spacing:-0.366px;">Inserir</span>
<span style="position:absolute;left:324.50px;top:43.00px;font-size:12.200px;line-height:1;color:#fff;white-space:pre;letter-spacing:-0.524px;">Transições</span>
<span style="position:absolute;left:406.00px;top:43.00px;font-size:12.200px;line-height:1;color:#fff;white-space:pre;letter-spacing:-0.231px;">Animações</span>
<span style="position:absolute;left:492.20px;top:43.00px;font-size:12.200px;line-height:1;color:#fff;white-space:pre;letter-spacing:-0.779px;">Revisão</span>
<span style="position:absolute;left:559.00px;top:43.00px;font-size:12.200px;line-height:1;color:#fff;white-space:pre;letter-spacing:-0.502px;">Exibir</span>
<span style="position:absolute;left:613.80px;top:43.00px;font-size:12.200px;line-height:1;color:#fff;white-space:pre;letter-spacing:0.049px;">Ajuda</span>
<span style="position:absolute;left:672.00px;top:43.00px;font-size:12.200px;line-height:1;color:#fff;white-space:pre;letter-spacing:-0.622px;">Foxit Reader PDF</span>
<span style="position:absolute;left:815.40px;top:43.00px;font-size:12.200px;line-height:1;color:#fff;white-space:pre;letter-spacing:-0.281px;">Diga-me o que você deseja fazer</span>
<span style="position:absolute;left:1267.40px;top:43.00px;font-size:12.200px;line-height:1;color:#fff;white-space:pre;letter-spacing:-0.021px;">Compartilhar</span>
<span style="position:absolute;left:77.00px;top:43.00px;font-size:12.200px;line-height:1;color:#b7472a;white-space:pre;letter-spacing:-0.346px;">Slide Mestre</span>
<span style="position:absolute;left:5.30px;top:107.00px;font-size:11.600px;line-height:1;color:#141414;white-space:pre;letter-spacing:-0.154px;">Inserir Slide</span>
<span style="position:absolute;left:17.50px;top:123.00px;font-size:11.600px;line-height:1;color:#141414;white-space:pre;letter-spacing:0.009px;">Mestre</span>
<span style="position:absolute;left:72.50px;top:107.00px;font-size:11.600px;line-height:1;color:#141414;white-space:pre;letter-spacing:-0.038px;">Inserir</span>
<span style="position:absolute;left:71.30px;top:123.00px;font-size:11.600px;line-height:1;color:#141414;white-space:pre;letter-spacing:0.174px;">Layout</span>
<span style="position:absolute;left:132.40px;top:73.00px;font-size:11.600px;line-height:1;color:#a6a6a6;white-space:pre;letter-spacing:-0.251px;">Excluir</span>
<span style="position:absolute;left:132.40px;top:96.00px;font-size:11.600px;line-height:1;color:#141414;white-space:pre;letter-spacing:-0.123px;">Renomear</span>
<span style="position:absolute;left:132.40px;top:119.00px;font-size:11.600px;line-height:1;color:#a6a6a6;white-space:pre;letter-spacing:-0.373px;">Preservar</span>
<span style="position:absolute;left:63.50px;top:142.00px;font-size:11.600px;line-height:1;color:#141414;white-space:pre;letter-spacing:-0.165px;">Editar Mestre</span>
<span style="position:absolute;left:212.50px;top:107.00px;font-size:11.600px;line-height:1;color:#a6a6a6;white-space:pre;letter-spacing:0.034px;">Layout</span>
<span style="position:absolute;left:212.50px;top:123.00px;font-size:11.600px;line-height:1;color:#a6a6a6;white-space:pre;letter-spacing:-0.091px;">mestre</span>
<span style="position:absolute;left:253.30px;top:107.00px;font-size:11.600px;line-height:1;color:#141414;white-space:pre;letter-spacing:-0.242px;">Inserir Espaço</span>
<span style="position:absolute;left:258.40px;top:123.00px;font-size:11.600px;line-height:1;color:#141414;white-space:pre;letter-spacing:-0.387px;">Reservado</span>
<span style="position:absolute;left:349.50px;top:81.00px;font-size:11.600px;line-height:1;color:#141414;white-space:pre;letter-spacing:0.197px;">Título</span>
<span style="position:absolute;left:349.50px;top:112.00px;font-size:11.600px;line-height:1;color:#141414;white-space:pre;letter-spacing:-0.406px;">Rodapés</span>
<span style="position:absolute;left:268.60px;top:142.00px;font-size:11.600px;line-height:1;color:#141414;white-space:pre;letter-spacing:-0.234px;">Layout Mestre</span>
<span style="position:absolute;left:425.60px;top:107.00px;font-size:11.600px;line-height:1;color:#141414;white-space:pre;letter-spacing:-0.541px;">Temas</span>
<span style="position:absolute;left:412.60px;top:142.00px;font-size:11.600px;line-height:1;color:#141414;white-space:pre;letter-spacing:-0.498px;">Editar Tema</span>
<span style="position:absolute;left:504.60px;top:73.00px;font-size:11.600px;line-height:1;color:#141414;white-space:pre;letter-spacing:-0.486px;">Cores</span>
<span style="position:absolute;left:504.60px;top:96.00px;font-size:11.600px;line-height:1;color:#141414;white-space:pre;letter-spacing:-0.253px;">Fontes</span>
<span style="position:absolute;left:504.60px;top:119.00px;font-size:11.600px;line-height:1;color:#141414;white-space:pre;letter-spacing:-0.211px;">Efeitos</span>
<span style="position:absolute;left:576.30px;top:73.00px;font-size:11.600px;line-height:1;color:#141414;white-space:pre;letter-spacing:-0.038px;">Estilos de Plano de Fundo</span>
<span style="position:absolute;left:575.60px;top:96.00px;font-size:11.600px;line-height:1;color:#141414;white-space:pre;letter-spacing:0.029px;">Ocultar Gráficos de Plano de Fundo</span>
<span style="position:absolute;left:576.30px;top:142.00px;font-size:11.600px;line-height:1;color:#141414;white-space:pre;letter-spacing:-0.070px;">Plano de Fundo</span>
<span style="position:absolute;left:787.50px;top:107.00px;font-size:11.600px;line-height:1;color:#141414;white-space:pre;letter-spacing:0.296px;">Tamanho</span>
<span style="position:absolute;left:787.50px;top:123.00px;font-size:11.600px;line-height:1;color:#141414;white-space:pre;letter-spacing:-0.103px;">do Slide</span>
<span style="position:absolute;left:789.00px;top:142.00px;font-size:11.600px;line-height:1;color:#141414;white-space:pre;letter-spacing:-0.454px;">Tamanho</span>
<span style="position:absolute;left:858.00px;top:107.00px;font-size:11.600px;line-height:1;color:#141414;white-space:pre;letter-spacing:0.133px;">Fechar modo de</span>
<span style="position:absolute;left:860.00px;top:123.00px;font-size:11.600px;line-height:1;color:#141414;white-space:pre;letter-spacing:0.090px;">exibição mestre</span>
<span style="position:absolute;left:884.00px;top:142.00px;font-size:11.600px;line-height:1;color:#141414;white-space:pre;letter-spacing:-0.521px;">Fechar</span>
<span style="position:absolute;left:475.00px;top:311.00px;font-size:53.699px;line-height:1;color:#000;white-space:pre;-webkit-text-stroke:1.7px #fff">Clique para editar o título</span>
<span style="position:absolute;left:690.50px;top:374.00px;font-size:53.200px;line-height:1;color:#000;white-space:pre;-webkit-text-stroke:1.7px #fff;letter-spacing:1.2px">Mestre</span>
<span style="position:absolute;left:557.60px;top:450.00px;font-size:21.519px;line-height:1;color:#111;white-space:pre;">Clique para editar o estilo do subtítulo Mestre</span>
<span style="position:absolute;left:379.00px;top:665.00px;font-size:11.000px;line-height:1;color:#8c8c8c;white-space:pre;letter-spacing:0.216px;">03/06/2020</span>
<span style="position:absolute;left:757.00px;top:665.00px;font-size:10.600px;line-height:1;color:#8c8c8c;white-space:pre;letter-spacing:-0.366px;">Rodapé</span>
<span style="position:absolute;left:1151.00px;top:665.00px;font-size:11.000px;line-height:1;color:#8c8c8c;white-space:pre;letter-spacing:0.413px;">‹nº›</span>
<span style="position:absolute;left:3.60px;top:710.00px;font-size:11.600px;line-height:1;color:#333;white-space:pre;letter-spacing:-0.334px;">Slide mestre</span>
<span style="position:absolute;left:115.20px;top:710.00px;font-size:11.600px;line-height:1;color:#333;white-space:pre;letter-spacing:-0.196px;">Português (Brasil)</span>
<span style="position:absolute;left:1308.20px;top:711.00px;font-size:10.800px;line-height:1;color:#333;white-space:pre;letter-spacing:-0.408px;">73%</span>

</body></html>
